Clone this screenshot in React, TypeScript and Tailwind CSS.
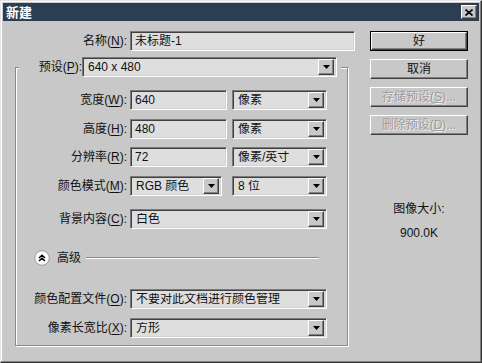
import React from 'react';

const font = { fontFamily: '"Liberation Sans", "Noto Sans CJK SC", sans-serif' };

const field =
  'bg-[#dedede] border border-t-[#7a7a7a] border-l-[#7a7a7a] border-b-white border-r-white shadow-[inset_1px_1px_0_#404040,inset_-1px_-1px_0_#d2d2d2]';

const raised =
  'bg-[#c8c8c8] border border-t-white border-l-white border-b-[#404040] border-r-[#404040] shadow-[inset_-1px_-1px_0_#808080]';

function Key({ k }: { k: string }) {
  return (
    <>
      (<span className="underline underline-offset-2">{k}</span>):
    </>
  );
}

function Label({ text, k, className = '' }: { text: string; k: string; className?: string }) {
  return (
    <span className={`flex-none text-right text-[12px] text-[#111] ${className}`}>
      {text}
      <Key k={k} />
    </span>
  );
}

function Select({ value, className = '' }: { value: string; className?: string }) {
  return (
    <div className={`${field} flex-none h-5 flex items-center pl-[5px] pr-[2px] ${className}`}>
      <span className="flex-1 truncate text-[12px] text-[#111] leading-none">{value}</span>
      <span className={`${raised} w-4 h-4 flex items-center justify-center`}>
        <svg width="7" height="4" viewBox="0 0 7 4">
          <polygon points="0,0 7,0 3.5,4" fill="#000" />
        </svg>
      </span>
    </div>
  );
}

function Input({ value, className = '' }: { value: string; className?: string }) {
  return (
    <div className={`${field} flex-none h-5 flex items-center pl-[4px] ${className}`}>
      <span className="text-[12px] text-[#111] leading-none">{value}</span>
    </div>
  );
}

function Row({ label, k, children, className = '' }: { label: string; k: string; children: React.ReactNode; className?: string }) {
  return (
    <div className={`flex items-center h-5 ${className}`}>
      <Label text={label} k={k} className="w-[111px]" />
      <div className="ml-[3px] flex items-center gap-[10px]">{children}</div>
    </div>
  );
}

function Button({ children, primary, disabled }: { children: React.ReactNode; primary?: boolean; disabled?: boolean }) {
  return (
    <div className={`h-5 w-[98px] ${primary ? 'border border-black' : ''}`}>
      <div
        className={`${raised} h-full flex items-center justify-center text-[12px] ${
          disabled ? 'text-[#9c9c9c] [text-shadow:1px_1px_0_#f0f0f0]' : 'text-[#111]'
        }`}
      >
        {children}
      </div>
    </div>
  );
}

export default function App() {
  return (
    <div
      style={font}
      className="w-[482px] h-[363px] bg-[#c8c8c8] border border-t-[#e4e4e4] border-l-[#e4e4e4] border-b-[#303030] border-r-[#303030] shadow-[inset_-1px_-1px_0_#808080,inset_1px_1px_0_#ffffff] flex flex-col"
    >
      {/* Title bar */}
      <div className="mx-[2px] mt-[2px] h-[18px] bg-[#2c3f52] flex items-center justify-between pl-[3px] pr-[2px]">
        <span className="text-white font-bold text-[13px] leading-none">新建</span>
        <span className={`${raised} w-4 h-[14px] flex items-center justify-center`}>
          <svg width="8" height="7" viewBox="0 0 8 7">
            <path d="M0.5 0.5 L7.5 6.5 M7.5 0.5 L0.5 6.5" stroke="#000" strokeWidth="1.6" />
          </svg>
        </span>
      </div>

      <div className="flex pt-[10px]">
        {/* Left column */}
        <div className="w-[368px] flex-none">
          <div className="flex items-center h-5">
            <Label text="名称" k="N" className="w-[126px]" />
            <Input value="未标题-1" className="ml-[3px] w-[225px]" />
          </div>

          <fieldset className="ml-[14px] mt-[6px] w-[333px] h-[289px] border border-[#8a8a8a] shadow-[inset_1px_1px_0_#fff,1px_1px_0_#fff]">
            <legend className="ml-[3px] bg-[#c8c8c8] pl-[14px] pr-[4px]">
              <div className="flex items-center h-5">
                <Label text="预设" k="P" className="w-[49px] text-left" />
                <Select value="640 x 480" className="w-[255px]" />
              </div>
            </legend>

            <Row label="宽度" k="W" className="mt-[13px]">
              <Input value="640" className="w-[97px]" />
              <Select value="像素" className="w-[95px] -ml-[5px]" />
            </Row>
            <Row label="高度" k="H" className="mt-[9px]">
              <Input value="480" className="w-[97px]" />
              <Select value="像素" className="w-[95px] -ml-[5px]" />
            </Row>
            <Row label="分辨率" k="R" className="mt-[8px]">
              <Input value="72" className="w-[97px]" />
              <Select value="像素/英寸" className="w-[95px] -ml-[5px]" />
            </Row>
            <Row label="颜色模式" k="M" className="mt-[9px]">
              <Select value="RGB 颜色" className="w-[92px]" />
              <Select value="8 位" className="w-[95px]" />
            </Row>
            <Row label="背景内容" k="C" className="mt-[13px]">
              <Select value="白色" className="w-[197px]" />
            </Row>

            <div className="flex items-center h-4 mt-[21px] ml-[18px] mr-[28px]">
              <svg width="16" height="16" viewBox="0 0 16 16" className="flex-none">
                <circle cx="8" cy="8" r="7.3" fill="#fafafa" stroke="#9a9a9a" strokeWidth="1" />
                <path d="M5 8 L8 5.3 L11 8 M5 11 L8 8.3 L11 11" fill="none" stroke="#000" strokeWidth="1.5" />
              </svg>
              <span className="ml-[7px] text-[12px] text-[#111]">高级</span>
              <span className="ml-[5px] flex-1 border-t border-t-[#8a8a8a] border-b border-b-white" />
            </div>

            <Row label="颜色配置文件" k="O" className="mt-[23px]">
              <Select value="不要对此文档进行颜色管理" className="w-[197px]" />
            </Row>
            <Row label="像素长宽比" k="X" className="mt-[9px]">
              <Select value="方形" className="w-[197px]" />
            </Row>
          </fieldset>
        </div>

        {/* Right column */}
        <div className="ml-[1px] w-[98px] flex flex-col">
          <div className="flex flex-col gap-[8px]">
            <Button primary>好</Button>
            <Button>取消</Button>
            <Button disabled>
              存储预设(<span className="underline">S</span>)...
            </Button>
            <Button disabled>
              删除预设(<span className="underline">D</span>)...
            </Button>
          </div>
          <div className="mt-[66px] text-center text-[12px] text-[#111] leading-4">图像大小:</div>
          <div className="mt-[8px] text-center text-[12px] text-[#111] leading-4">900.0K</div>
        </div>
      </div>
    </div>
  );
}
